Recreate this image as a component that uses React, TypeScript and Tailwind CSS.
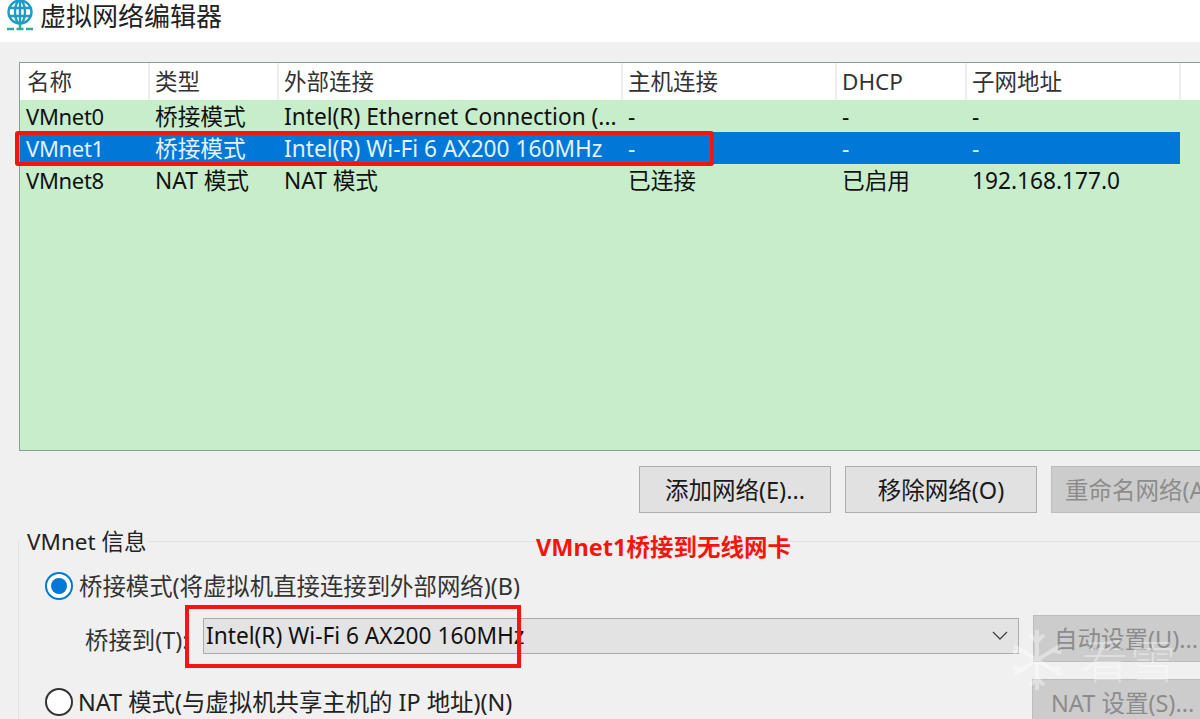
const font = { fontFamily: '"Noto Sans", "Noto Sans CJK SC", sans-serif' };
const cols = "grid grid-cols-[130px_129px_344px_214px_130px_214px]";

const rows = [
  ["VMnet0", "桥接模式", "Intel(R) Ethernet Connection (...", "-", "-", "-"],
  ["VMnet1", "桥接模式", "Intel(R) Wi-Fi 6 AX200 160MHz", "-", "-", "-"],
  ["VMnet8", "NAT 模式", "NAT 模式", "已连接", "已启用", "192.168.177.0"],
];
const heads = ["名称", "类型", "外部连接", "主机连接", "DHCP", "子网地址"];

function Btn({ label, disabled, className }: { label: string; disabled?: boolean; className: string }) {
  return (
    <div
      className={`flex shrink-0 items-center justify-center overflow-hidden whitespace-nowrap border text-[23.5px] ${
        disabled ? "border-[#bdbdbd] bg-[#cccccc] text-[#8c8c8c]" : "border-[#adadad] bg-[#e1e1e1] text-[#1a1a1a]"
      } ${className}`}
    >
      {label}
    </div>
  );
}

export default function App() {
  return (
    <div style={font} className="relative flex h-[719px] w-[1200px] flex-col overflow-hidden bg-[#f0f0f0] text-[22.7px] leading-[32px] text-[#111]">
      <div className="flex h-[42px] shrink-0 items-start gap-[6px] bg-white pl-[6px]">
        <svg width="28" height="32" viewBox="0 0 28 32" fill="none" stroke="#1f9bc4" strokeWidth="2.4">
          <circle cx="14" cy="12" r="11.5" />
          <ellipse cx="14" cy="12" rx="5" ry="11.5" />
          <path d="M3 8h22M3 16h22M14 0v24" />
          <path d="M14 24v4" stroke="#2ab09a" />
          <path d="M1 29h7M10.5 29h7M20 29h7" stroke="#2ab09a" />
        </svg>
        <span className="text-[26px] leading-[33px] text-[#222]">虚拟网络编辑器</span>
      </div>

      <div className="mt-[20px] ml-[19px] h-[389px] w-[1190px] shrink-0 border border-[#86a096] bg-[#c8edcb]">
        <div className={`${cols} h-[37px] bg-white`}>
          {heads.map((h, i) => (
            <div key={h} className={`h-[37px] border-r-2 border-[#eeeeee] text-[22.5px] leading-[38px] text-[#333] ${i === 0 ? "pl-[7px]" : "pl-[5px]"}`}>
              {h}
            </div>
          ))}
        </div>
        {rows.map((r, i) => (
          <div key={r[0]} className={`${cols} h-[32px] w-[1160px] ${i === 1 ? "bg-[#0078d7] text-[#e4f1fb]" : "text-[#111]"}`}>
            {r.map((c, j) => (
              <div
                key={j}
                className={`overflow-hidden whitespace-nowrap leading-[33px] ${j === 0 ? "pl-[6px] text-[22px] tracking-[-0.3px]" : "pl-[5px]"}`}
              >
                {c}
              </div>
            ))}
          </div>
        ))}
      </div>

      <div className="mt-[15px] flex shrink-0 gap-[14px] pl-[639px]">
        <Btn label="添加网络(E)..." className="h-[47px] w-[192px]" />
        <Btn label="移除网络(O)" className="h-[47px] w-[192px]" />
        <Btn label="重命名网络(A)" disabled className="h-[47px] w-[192px] !justify-start pl-[13px]" />
      </div>

      <div className="mt-[28px] ml-[18px] flex w-[1200px] flex-1 flex-col border-t border-l border-[#e2e2e2] pl-[26px]">
        <div className="-mt-[16px] -ml-[26px] w-fit bg-[#f0f0f0] pl-[8px] pr-[2px] text-[22.5px] leading-[32px] text-[#222]">VMnet 信息</div>

        <div className="mt-[12px] flex items-center gap-[6px]">
          <div className="flex h-[28px] w-[28px] items-center justify-center rounded-full border-2 border-[#0078d7] bg-white">
            <div className="h-[16px] w-[16px] rounded-full bg-[#0078d7]" />
          </div>
          <span className="text-[23.4px] text-[#333]">桥接模式(将虚拟机直接连接到外部网络)(B)</span>
        </div>

        <div className="mt-[13px] flex h-[47px] items-start">
          <span className="ml-[40px] mt-[9px] w-[118px] shrink-0 whitespace-nowrap text-[23.4px] text-[#333]">桥接到(T):</span>
          <div className="mt-[3px] flex h-[36px] w-[816px] shrink-0 items-center justify-between border border-[#acacac] bg-[#e3e3e3] pl-[2px] pr-[10px] text-[#111]">
            <span>Intel(R) Wi-Fi 6 AX200 160MHz</span>
            <svg width="16" height="10" viewBox="0 0 16 10" fill="none" stroke="#444" strokeWidth="1.3">
              <path d="M1 1l7 7 7-7" />
            </svg>
          </div>
          <Btn label="自动设置(U)..." disabled className="ml-[14px] h-[47px] w-[180px] !justify-start pl-[20px]" />
        </div>

        <div className="mt-[16px] flex h-[40px] items-start">
          <div className="mt-[8px] flex items-center gap-[5px]">
            <div className="h-[28px] w-[28px] rounded-full border-2 border-[#333] bg-white" />
            <span className="text-[23.4px] text-[#222]">NAT 模式(与虚拟机共享主机的 IP 地址)(N)</span>
          </div>
        </div>
      </div>

      <Btn label="NAT 设置(S)..." disabled className="absolute left-[1032px] top-[679px] h-[47px] w-[180px] !justify-start pl-[18px]" />

      {/* annotations */}
      <div className="absolute left-[15px] top-[131px] h-[35px] w-[699px] rounded-[3px] border-[4px] border-[#f5150f]" />
      <div className="absolute left-[185px] top-[605px] h-[63px] w-[336px] border-[4px] border-[#f5150f]" />
      <div className="absolute left-[536px] top-[531px] whitespace-nowrap text-[23.5px] font-bold text-[#f5150f]">VMnet1桥接到无线网卡</div>

      {/* watermark */}
      <div className="absolute left-[1010px] top-[628px] flex items-center gap-[18px] text-white/40">
        <svg width="54" height="64" viewBox="0 0 56 66" fill="none" stroke="currentColor" strokeWidth="4">
          <path d="M28 2v62M4 18l48 30M52 18L4 48M28 14l-7-7M28 14l7-7M28 52l-7 7M28 52l7 7M12 23l-9 2M44 23l9 2M12 43l-9-2M44 43l9-2" />
        </svg>
        <span className="whitespace-nowrap text-[46px] font-light leading-[60px] tracking-[2px]">看雪</span>
      </div>
    </div>
  );
}
